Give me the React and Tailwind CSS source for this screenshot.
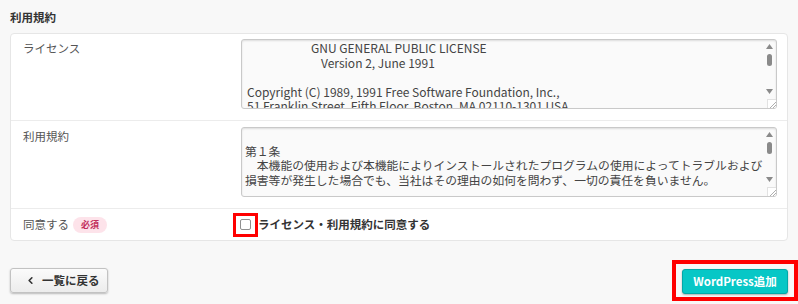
import React from 'react';
import { ChevronLeft } from 'lucide-react';

const gpl = [
  { pad: 'pl-[66px]', text: 'GNU GENERAL PUBLIC LICENSE' },
  { pad: 'pl-[76px]', text: 'Version 2, June 1991' },
  { pad: '', text: '\u00a0' },
  { pad: 'pl-[2px]', text: 'Copyright (C) 1989, 1991 Free Software Foundation, Inc.,' },
  { pad: 'pl-[2px]', text: '51 Franklin Street, Fifth Floor, Boston, MA 02110-1301 USA' },
];

const terms = [
  '\u00a0',
  '第１条',
  '　本機能の使用および本機能によりインストールされたプログラムの使用によってトラブルおよび',
  '損害等が発生した場合でも、当社はその理由の如何を問わず、一切の責任を負いません。',
];

// fake scrollbar drawn like the native one in the shot
function ScrollBar() {
  return (
    <div className="relative w-[13px] shrink-0 flex flex-col items-center">
      <svg width="7" height="5" className="mt-[4px]" viewBox="0 0 7 5">
        <path d="M0 5 L3.5 0 L7 5 Z" fill="#8a8a8a" />
      </svg>
      <div className="mt-[5px] w-[5px] h-[12px] rounded-full bg-[#8a8a8a]" />
      <div className="flex-1" />
      <svg width="7" height="5" className="mb-[14px]" viewBox="0 0 7 5">
        <path d="M0 0 L7 0 L3.5 5 Z" fill="#8a8a8a" />
      </svg>
      <div className="absolute right-0 bottom-0 w-[9px] h-[9px] bg-white border-l border-t border-[#e2e2e2]">
        <svg width="9" height="9" viewBox="0 0 9 9">
          <path d="M2 8 L8 2 M5 8 L8 5" stroke="#9a9a9a" strokeWidth="0.8" />
        </svg>
      </div>
    </div>
  );
}

function TextBox({ jp, children }) {
  return (
    <div className="flex h-[70px] rounded-[3px] border border-[#c9c9c9] bg-[#fafafa] shadow-[inset_0_1px_2px_rgba(0,0,0,0.12)] overflow-hidden">
      <div className={`flex-1 overflow-hidden pl-[3px] pt-[1px] leading-[14.6px] text-[#444] ${jp ? 'text-[11.8px]' : 'text-[12px]'}`}>
        {children}
      </div>
      <ScrollBar />
    </div>
  );
}

export default function App() {
  return (
    <div
      className="min-h-[304px] bg-[#f8f8f8] text-[#444]"
      style={{ fontFamily: '"Noto Sans CJK JP", "Noto Sans", sans-serif' }}
    >
      <h2 className="pl-[10px] pt-[8px] h-[33px] text-[11.5px] font-bold leading-[18px] text-[#333]">利用規約</h2>

      <div className="mx-[10px] rounded-[4px] border border-[#e6e6e6] bg-white">
        {/* license */}
        <div className="grid grid-cols-[218px_1fr] pl-[12px] pr-[10px] pt-[5px] pb-[11px] border-b border-[#ececec]">
          <div className="text-[11.5px] leading-[18px] text-[#555]">ライセンス</div>
          <TextBox>
            {gpl.map((l, i) => (
              <div key={i} className={`${l.pad} whitespace-nowrap`}>{l.text}</div>
            ))}
          </TextBox>
        </div>

        {/* terms */}
        <div className="grid grid-cols-[218px_1fr] pl-[12px] pr-[10px] pt-[6px] pb-[11px] border-b border-[#ececec]">
          <div className="text-[11.5px] leading-[18px] text-[#555]">利用規約</div>
          <TextBox jp>
            {terms.map((l, i) => (
              <div key={i} className="whitespace-nowrap">{l}</div>
            ))}
          </TextBox>
        </div>

        {/* agree */}
        <div className="grid grid-cols-[218px_1fr] items-center pl-[12px] pr-[10px] h-[31px]">
          <div className="flex items-center gap-[4px]">
            <span className="text-[11.5px] text-[#555]">同意する</span>
            <span className="rounded-full bg-[#fde3ea] px-[8px] h-[16px] flex items-center text-[9px] font-bold text-[#c2305d]">必須</span>
          </div>
          <label className="flex items-center -ml-[8px]">
            <span className="flex items-center justify-center w-[25px] h-[24px] border-[3px] border-[#f00]">
              <span className="w-[11px] h-[11px] rounded-[2px] border border-[#8f8f8f] bg-white" />
            </span>
            <span className="text-[11.5px] font-bold text-[#333]">ライセンス・利用規約に同意する</span>
          </label>
        </div>
      </div>

      <div className="flex items-center justify-between pl-[10px] mt-[19px]">
        <button className="flex items-center w-[98px] h-[25px] rounded-[3px] border border-[#c2c2c2] bg-gradient-to-b from-[#fbfbfb] to-[#ececec] shadow-[0_1px_2px_rgba(0,0,0,0.25)] pl-[14px] text-[11.5px] font-bold text-[#333]">
          <ChevronLeft size={11} strokeWidth={3.5} />
          <span className="ml-[6px]">一覧に戻る</span>
        </button>
        <div className="border-[4px] border-[#f00] pl-[6px] pr-[6px] pt-[3px] pb-[3px]">
          <button className="w-[106px] h-[25px] rounded-[3px] border border-[#03a8a8] bg-[#07c7c6] shadow-[0_1px_2px_rgba(0,0,0,0.3)] text-[11.5px] font-bold text-white">
            WordPress追加
          </button>
        </div>
      </div>
    </div>
  );
}
